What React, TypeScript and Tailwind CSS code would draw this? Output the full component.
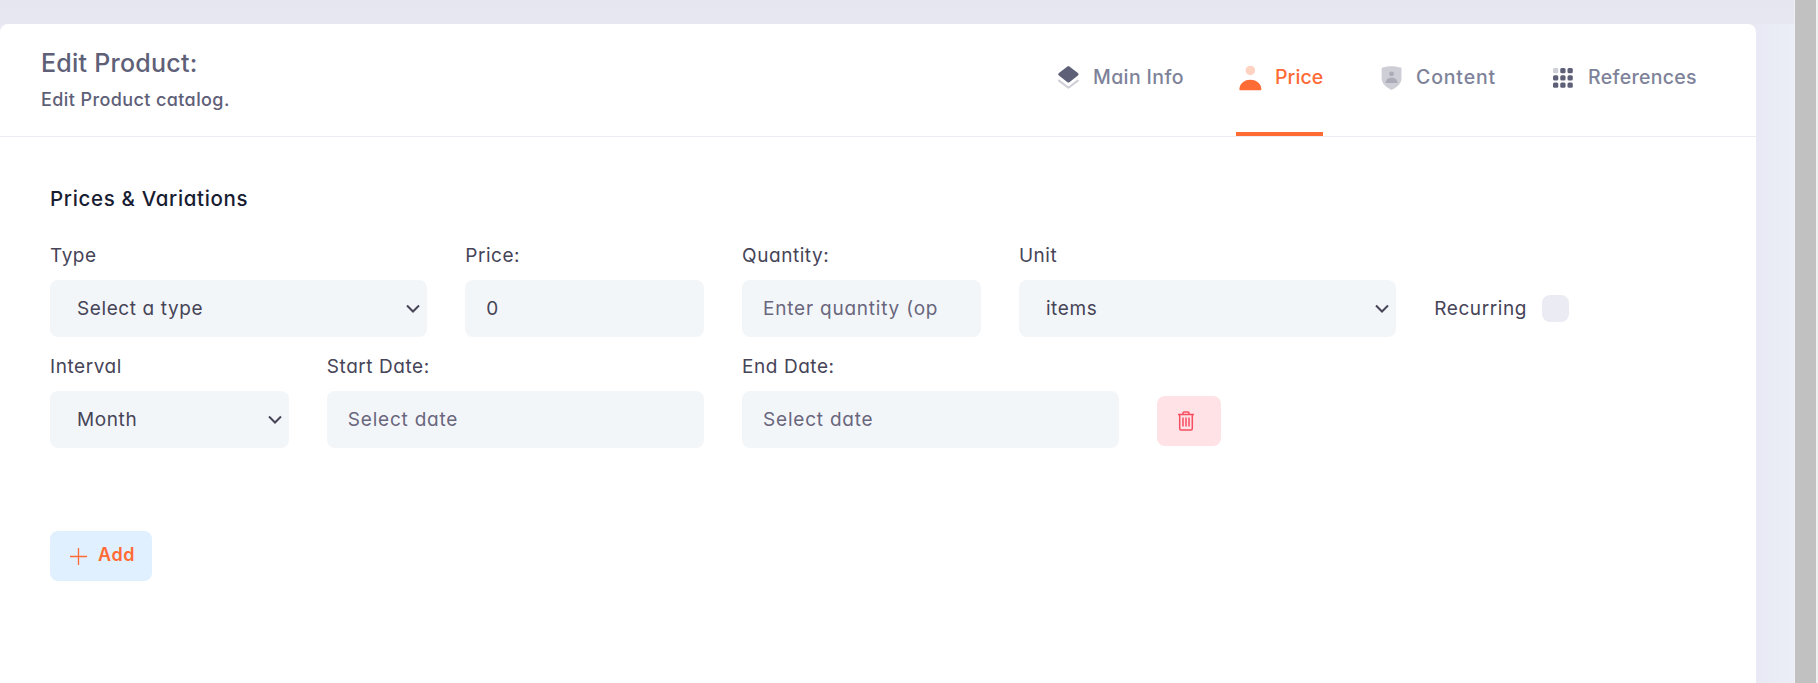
import type { ReactNode } from "react";

const label = "block h-[30px] text-[19px] leading-[30px] tracking-[0.55px] text-[#464457]";
const box =
  "mt-[9px] flex h-[57px] items-center rounded-[8px] bg-[#f3f6f9] pt-[2px] text-[19px] whitespace-nowrap";

function Select({ children }: { children: ReactNode }) {
  return (
    <div className={`${box} justify-between pr-[7px] pl-[27px] tracking-[0.6px] text-[#464457]`}>
      {children}
      <svg className="mb-[2px]" width="14" height="10" viewBox="0 0 14 10" fill="none" stroke="#464457" strokeWidth="2">
        <path d="M1 1.5 7 7.5 13 1.5" />
      </svg>
    </div>
  );
}

function Input({ filled, children }: { filled?: boolean; children: ReactNode }) {
  return (
    <div className={`${box} px-[21px] tracking-[0.78px] ${filled ? "text-[#464457]" : "text-[#69667d]"}`}>
      {children}
    </div>
  );
}

function LayersIcon() {
  return (
    <svg width="28" height="28" viewBox="0 0 28 28" fill="#5e6078">
      <path
        d="M5 15.600 14.400 22.800 23.800 15.600"
        fill="none"
        stroke="#5e6078"
        strokeWidth="2"
        strokeLinecap="round"
        strokeLinejoin="round"
        opacity=".3"
      />
      <path d="M13.400 1.400a1.600 1.600 0 0 1 2 0l8.500 6.700a1.500 1.500 0 0 1 0 2.400l-8.500 6.700a1.600 1.600 0 0 1-2 0l-8.500-6.700a1.500 1.500 0 0 1 0-2.400z" />
    </svg>
  );
}

function UserIcon() {
  return (
    <svg width="28" height="28" viewBox="0 0 24 24" fill="#ff6b35">
      <circle cx="12.300" cy="5.500" r="4.100" opacity=".3" />
      <path d="M2.900 21.500c.4-5 4.500-7.900 9.400-7.900s9.100 2.900 9.500 7.900c0 .4-.2.900-.8.900H3.600c-.5 0-.8-.5-.7-.9z" />
    </svg>
  );
}

function ShieldIcon() {
  return (
    <svg width="28" height="28" viewBox="0 0 24 24" fill="#5e5c76">
      <path
        opacity=".3"
        d="M4 4c2.500-.6 5.500-1.200 8.500-1.200S18.500 3.400 21 4v9.300c0 5-4.500 7.500-8.500 9.900-4-2.400-8.500-4.900-8.500-9.900z"
      />
      <circle cx="12.500" cy="9.300" r="2.100" opacity=".3" />
      <path opacity=".3" d="M7.300 17.200c.2-2.900 2.500-4.500 5.200-4.500s5 1.600 5.200 4.500z" />
    </svg>
  );
}

function GridIcon() {
  const at = [2, 9.25, 16.5];
  return (
    <svg width="24" height="24" viewBox="0 0 24 24" fill="#5e6078">
      {at.map((y) =>
        at.map((x) => (
          <rect key={`${x}-${y}`} x={x} y={y} width="5.300" height="5.300" rx="1.500" opacity={x === 2 && y === 2 ? 0.3 : 1} />
        )),
      )}
    </svg>
  );
}

export default function App() {
  return (
    <div className="flex h-[683px] w-full overflow-hidden bg-[#ebeef7] font-['Inter','Open_Sans',sans-serif] [font-feature-settings:'cv11']">
      <div className="min-w-0 flex-1 bg-linear-to-b from-[#e6e6f0] to-[#e9ebf5] to-[60px] pt-[24px]">
        <div className="flex h-full">
          <main className="h-full w-[1756px] shrink-0 rounded-t-[8px] bg-white">
            <header className="flex h-[113px] justify-between border-b border-[#ebedf3] pr-[59px] pl-[41px]">
              <div className="pt-[22px]">
                <h1 className="text-[25px] leading-[34px] font-medium tracking-[0.25px] text-[#5e6078]">Edit Product:</h1>
                <p className="mt-[8px] text-[18px] leading-[24px] font-medium tracking-[0.4px] text-[#5e6078]">
                  Edit Product catalog.
                </p>
              </div>
              <nav className="flex h-[112px] text-[19.5px] leading-[30px] text-[#7e8299]">
                <a className="mr-[54px] flex w-[128px] items-start pt-[38px]">
                  <span className="mr-[11px] w-[28px] pt-[3px]"><LayersIcon /></span>
                  <span className="font-medium tracking-[0.38px] whitespace-nowrap">Main Info</span>
                </a>
                <a className="mr-[54px] flex w-[87px] items-start border-b-4 border-[#ff6b35] pt-[38px] text-[#ff6b35]">
                  <span className="mr-[11px] w-[28px] pt-[2px]"><UserIcon /></span>
                  <span className="font-medium tracking-[0.1px] whitespace-nowrap">Price</span>
                </a>
                <a className="mr-[54px] flex w-[118px] items-start pt-[38px]">
                  <span className="mr-[11px] w-[28px] pt-px"><ShieldIcon /></span>
                  <span className="font-medium tracking-[0.85px] whitespace-nowrap">Content</span>
                </a>
                <a className="flex w-[148px] items-start pt-[38px]">
                  <span className="mr-[11px] w-[28px] pt-[4px] pl-[2px]"><GridIcon /></span>
                  <span className="font-medium tracking-[0.32px] whitespace-nowrap">References</span>
                </a>
              </nav>
            </header>

            <section className="w-[1673px] pt-[47px] pl-[50px]">
              <h2 className="text-[20.5px] leading-[30px] font-medium tracking-[0.66px] text-[#181c32]">Prices &amp; Variations</h2>
              <div className="mt-[27px] grid grid-cols-12 gap-x-[38px] gap-y-[15px]">
                <div className="col-span-3">
                  <span className={label}>Type</span>
                  <Select>Select a type</Select>
                </div>
                <div className="col-span-2">
                  <span className={label}>Price:</span>
                  <Input filled>0</Input>
                </div>
                <div className="col-span-2">
                  <span className={label}>Quantity:</span>
                  <Input>Enter quantity (op</Input>
                </div>
                <div className="col-span-3">
                  <span className={label}>Unit</span>
                  <Select>items</Select>
                </div>
                <div className="col-span-2 flex h-[57px] items-center gap-[16px] self-end text-[19px] tracking-[0.6px] text-[#464457]">
                  <span className="w-[92px] pt-[2px]">Recurring</span>
                  <span className="size-[27px] rounded-[8px] bg-[#ebecf3]" />
                </div>

                <div className="col-span-2">
                  <span className={label}>Interval</span>
                  <Select>Month</Select>
                </div>
                <div className="col-span-3">
                  <span className={label}>Start Date:</span>
                  <Input>Select date</Input>
                </div>
                <div className="col-span-3">
                  <span className={label}>End Date:</span>
                  <Input>Select date</Input>
                </div>
                <div className="col-span-1 pt-[44px]">
                  <button className="flex h-[50px] w-[64px] items-center rounded-[8px] bg-[#ffe2e5] pl-[21px]">
                    <svg width="16" height="20" viewBox="0 0 16 20" fill="none" stroke="#f64e60" strokeWidth="1.500">
                      <path d="M0 3.500h16M5 3.500V2.200C5 1.300 5.500 1 6 1h4c.5 0 1 .3 1 1.200v1.300M1.700 3.500v14c0 .9.5 1.500 1.300 1.500h10c.8 0 1.300-.6 1.300-1.500v-14M5 6.500v9M8 6.500v9M11 6.500v9" />
                    </svg>
                  </button>
                </div>
              </div>

              <button className="mt-[83px] flex h-[50px] w-[102px] items-center rounded-[8px] bg-[#e1f0ff] pl-[20px] text-[#ff6b35]">
                <svg width="17" height="17" viewBox="0 0 17 17" stroke="#ff6b35" strokeWidth="1.300">
                  <path d="M8.500 0v17M0 8.500h17" />
                </svg>
                <span className="-mt-[2px] ml-[11px] text-[18px] leading-[26px] font-semibold tracking-[0.6px]">Add</span>
              </button>
            </section>
          </main>
          <div className="flex-1 bg-linear-to-r from-[#e8e9f4] to-[#ebeef7]" />
        </div>
      </div>
      <div className="w-[24px] bg-[#f1f1f1] pr-[2px] pl-[1px]">
        <div className="h-full bg-[#c1c1c1]" />
      </div>
    </div>
  );
}
